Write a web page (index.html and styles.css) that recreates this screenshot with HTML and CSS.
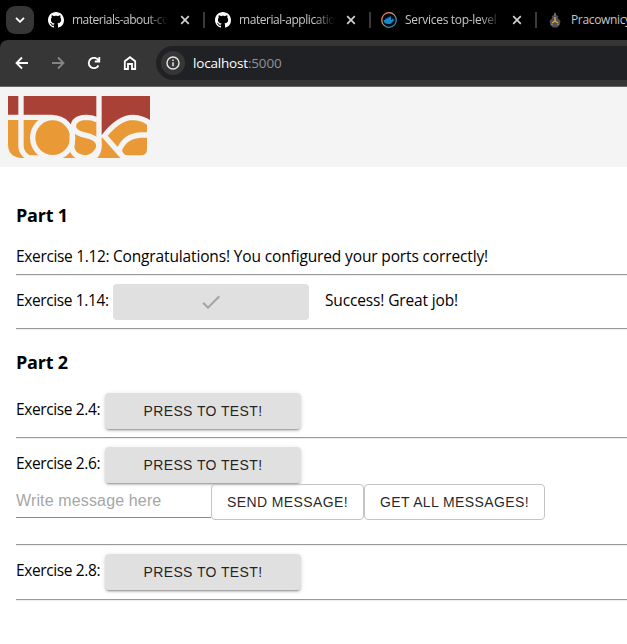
FILE: index.html
```html
<!DOCTYPE html>
<html lang="en">
<head>
<meta charset="utf-8">
<title>localhost:5000</title>
<link rel="stylesheet" href="styles.css">
</head>
<body>
<svg class="defs" width="0" height="0">
  <symbol id="github" viewBox="0 0 16 16"><path d="M8 0C3.58 0 0 3.58 0 8c0 3.54 2.29 6.53 5.47 7.59.4.07.55-.17.55-.38 0-.19-.01-.82-.01-1.49-2.01.37-2.53-.49-2.69-.94-.09-.23-.48-.94-.82-1.13-.28-.15-.68-.52-.01-.53.63-.01 1.08.58 1.23.82.72 1.21 1.87.87 2.33.66.07-.52.28-.87.51-1.07-1.78-.2-3.64-.89-3.64-3.95 0-.87.31-1.59.82-2.15-.08-.2-.36-1.02.08-2.12 0 0 .67-.21 2.2.82.64-.18 1.32-.27 2-.27s1.36.09 2 .27c1.53-1.04 2.2-.82 2.2-.82.44 1.1.16 1.92.08 2.12.51.56.82 1.27.82 2.15 0 3.07-1.87 3.75-3.65 3.95.29.25.54.73.54 1.48 0 1.07-.01 1.93-.01 2.2 0 .21.15.46.55.38A8.01 8.01 0 0 0 16 8c0-4.42-3.58-8-8-8z" fill="#fff"/></symbol>
  <symbol id="close" viewBox="0 0 10 10"><path d="M1.2 1.2l7.6 7.6M8.8 1.2L1.2 8.8" stroke="#d0d0d0" stroke-width="1.7"/></symbol>
</svg>
<div class="tabs">
  <div class="tab-menu"><svg width="10" height="6" viewBox="0 0 10 6"><path d="M1 .8l4 4 4-4" fill="none" stroke="#fff" stroke-width="1.8"/></svg></div>
  <div class="tab"><svg class="fav"><use href="#github"/></svg><span class="tab-title t1">materials-about-co</span><svg class="close"><use href="#close"/></svg></div>
  <div class="tab"><svg class="fav"><use href="#github"/></svg><span class="tab-title t2">material-applicatio</span><svg class="close"><use href="#close"/></svg></div>
  <div class="tab"><svg class="fav" viewBox="0 0 16 16"><defs><linearGradient id="ring" x2="1" y2="1"><stop offset="0" stop-color="#e65a5a"/><stop offset=".35" stop-color="#f0a35e"/><stop offset=".65" stop-color="#3c9fa8"/><stop offset="1" stop-color="#3977d3"/></linearGradient></defs><circle cx="8" cy="8" r="7.3" fill="#05090f" stroke="url(#ring)" stroke-width="1.2"/><path d="M2.4 8h2V6.6h2V5.6h2V4.4h1.6v3.3h1.1q0-1 .6-1.5.8.5.8 1.5l1.2.1q-.3 1-1.6 1.1-1.1 3.1-4.8 3.1-4.4 0-4.9-4z" fill="#1289d3"/></svg><span class="tab-title t3">Services top-level</span><svg class="close"><use href="#close"/></svg></div>
  <div class="tab last"><svg class="fav crest" viewBox="0 0 16 16"><path d="M8 0l1.3 3.2 2 .8-.6 2 2.8 3-.8 4L10 15.5H6L3.3 13l-.8-4 2.8-3-.6-2 2-.8z" fill="#505158"/><path d="M8 1v3M4 12l2 1M12 12l-2 1" stroke="#999" stroke-width=".8"/><path d="M8 5v5M8 9l-3 2M8 9l3 2" stroke="#e2a423" stroke-width="1.5"/></svg><span class="tab-title t4">Pracownicy</span></div>
</div>
<div class="toolbar">
  <svg class="nav" viewBox="0 0 16 16"><path d="M14 8H2.8M8 2.5L2.5 8 8 13.5" stroke="#fff"/></svg>
  <svg class="nav" viewBox="0 0 16 16"><path d="M2 8h11.2M8 2.5L13.5 8 8 13.5" stroke="#858585"/></svg>
  <svg class="nav" viewBox="0 0 16 16"><path d="M12.5 10.5a5.2 5.2 0 1 1 0-5M13.3 2v4.5H8.8" stroke="#fff"/></svg>
  <svg class="nav" viewBox="0 0 16 16"><path d="M2.8 14V6.3L8 2.2l5.2 4.1V14H10V9H6v5z" stroke="#fff"/></svg>
  <div class="address"><span class="info"><svg width="14" height="14" viewBox="0 0 14 14"><circle cx="7" cy="7" r="6" fill="none" stroke="#e8e8e8" stroke-width="1.4"/><path d="M7 6.2v4M7 3.5v1.5" stroke="#e8e8e8" stroke-width="1.5"/></svg></span><span class="url">localhost<span class="port">:5000</span></span></div>
</div>
<header class="banner">
  <svg class="logo" viewBox="24 36 426 186">
    <path d="M24 36H450V222H62Q24 218 24 180z" fill="#e99a37"/>
    <path d="M24 36H450V120L400 100Q355 102 310 156H297V104H250L212 122L158 100H24z" fill="#a94137"/>
    <path d="M430 108L441 124V196Q441 214 422 214H384Q366 214 366 196L360 206V224H452V108z" fill="#f4f4f4"/>
    <g fill="none" stroke="#f4f4f4" stroke-width="16">
      <path d="M63 34V188Q65 210 88 222H160M24 100H158"/>
      <circle cx="158" cy="161" r="60"/>
      <path d="M292 108Q278 100 258 100Q220 102 220 128Q222 144 246 151L272 158Q297 166 297 188M216 154Q218 174 215 192Q222 220 256 222Q284 220 297 190"/>
      <path d="M297 34V188Q296 212 276 224M308 162Q354 100 400 100Q434 102 454 122M310 152L372 222M446 153H422Q374 156 358 198"/>
    </g>
  </svg>
</header>
<main>
  <h3>Part 1</h3>
  <div class="line"><span class="prefix">Exercise 1.12: </span>Congratulations! You configured your ports correctly!</div>
  <hr>
  <div class="row r14"><span class="label wide">Exercise 1.14:</span><button class="btn done" disabled><svg width="24" height="24" viewBox="0 0 24 24"><path d="M9 16.17L4.83 12l-1.42 1.41L9 19 21 7l-1.41-1.41z" fill="#a3a3a3"/></svg></button><span class="success">Success! Great job!</span></div>
  <hr>
  <h3 class="second">Part 2</h3>
  <div class="row r24"><span class="label">Exercise 2.4:</span><button class="btn">PRESS TO TEST!</button></div>
  <hr>
  <div class="row r26"><span class="label">Exercise 2.6:</span><button class="btn">PRESS TO TEST!</button></div>
  <div class="message"><input type="text" placeholder="Write message here"><button class="outlined send">SEND MESSAGE!</button><button class="outlined get">GET ALL MESSAGES!</button></div>
  <hr>
  <div class="row r28"><span class="label">Exercise 2.8:</span><button class="btn">PRESS TO TEST!</button></div>
  <hr>
</main>
</body>
</html>
```
FILE: styles.css
```css
* { box-sizing: border-box; }
body { margin: 0; height: 644px; overflow: hidden; background: #fff; color: #000; font: 16px "Open Sans", "Noto Sans", sans-serif; }
svg { flex: none; }
.defs { position: absolute; }
.tabs { display: flex; align-items: center; height: 40px; padding-left: 6px; background: #000; overflow: hidden; }
.tab-menu { flex: none; display: flex; align-items: center; justify-content: center; width: 28px; height: 28px; border-radius: 9px; background: #363636; }
.tab { flex: none; display: flex; align-items: center; width: 166px; height: 16px; padding-left: 10px; border-left: 2px solid #3a3a3a; color: #c7c7c7; font-size: 12px; }
.tab-menu + .tab { border-left: 0; width: 169px; padding-left: 14px; }
.tab:not(:nth-child(2)) .close { margin-left: 11px; }
.fav { width: 16px; height: 16px; }
.tab-title { width: 96px; margin-left: 8px; overflow: hidden; white-space: nowrap; line-height: 20px; -webkit-mask-image: linear-gradient(to right, #000 78%, transparent 100%); }
.t1 { letter-spacing: -.5px; }
.t2 { letter-spacing: -.45px; }
.t3 { letter-spacing: -.3px; }
.last { width: 92px; }
.t4 { width: 66px; letter-spacing: -.35px; -webkit-mask-image: none; }
.close { width: 10px; height: 10px; margin-left: 12px; }
.toolbar { display: flex; align-items: center; height: 47px; padding-left: 14px; background: #363636; border-bottom: 1px solid #666; border-top-left-radius: 8px; box-shadow: -8px -8px 0 #000; }
.nav { width: 16px; height: 16px; margin-right: 20px; fill: none; stroke-width: 1.8; }
.address { flex: 1; display: flex; align-items: center; height: 34px; margin-left: -2px; padding-left: 5px; border-radius: 17px 0 0 17px; background: #202124; }
.info { display: flex; align-items: center; justify-content: center; width: 24px; height: 24px; border-radius: 50%; background: #363636; }
.url { margin-left: 8px; color: #fff; font-size: 13.5px; letter-spacing: -.18px; }
.port { color: #909295; }
.banner { height: 80px; padding: 9px 8px; background: #f4f4f4; }
.logo { display: block; width: 142px; height: 62px; }
main { padding-left: 16px; white-space: nowrap; }
h3 { margin: 35px 0 14px; height: 27px; line-height: 27px; font-size: 18px; font-weight: 700; letter-spacing: -.2px; }
h3.second { margin: 19px 0 17px; }
.line { height: 31px; line-height: 27px; }
.line, .label, .success { font-size: 15.5px; letter-spacing: -.14px; }
.prefix { letter-spacing: -.34px; }
hr { margin: 0; height: 2px; border: 0; border-top: 1px solid #9a9a9a; border-bottom: 1px solid #eee; }
.row { display: flex; align-items: flex-start; }
.label, .success { line-height: 32px; }
.label { width: 89px; letter-spacing: -.38px; }
.wide { width: 97px; }
.success { margin-left: 16px; }
.r14 { height: 52px; padding-top: 8px; }
.r24 { height: 44px; }
.r26 { height: 45px; padding-top: 8px; }
.r28 { height: 53px; padding-top: 8px; }
button { font: 14px "Liberation Sans", Arial, sans-serif; letter-spacing: .4px; color: rgba(0,0,0,.87); }
.btn { width: 196px; height: 36px; padding: 0; border: 0; border-radius: 4px; background: #e0e0e0; box-shadow: 0 3px 1px -2px rgba(0,0,0,.2), 0 2px 2px rgba(0,0,0,.14), 0 1px 5px rgba(0,0,0,.12); }
.done { display: flex; align-items: center; justify-content: center; box-shadow: none; }
.message { display: flex; height: 60px; }
input { width: 195px; height: 34px; padding: 0; border: 0; border-bottom: 1px solid #8c8c8c; outline: 0; background: transparent; font: 16px "Liberation Sans", Arial, sans-serif; letter-spacing: .14px; }
input::placeholder { color: #a6a6a6; opacity: 1; }
.outlined { height: 36px; padding: 0; border: 1px solid #c4c4c4; border-radius: 4px; background: transparent; }
.send { width: 153px; }
.get { width: 181px; }
```
